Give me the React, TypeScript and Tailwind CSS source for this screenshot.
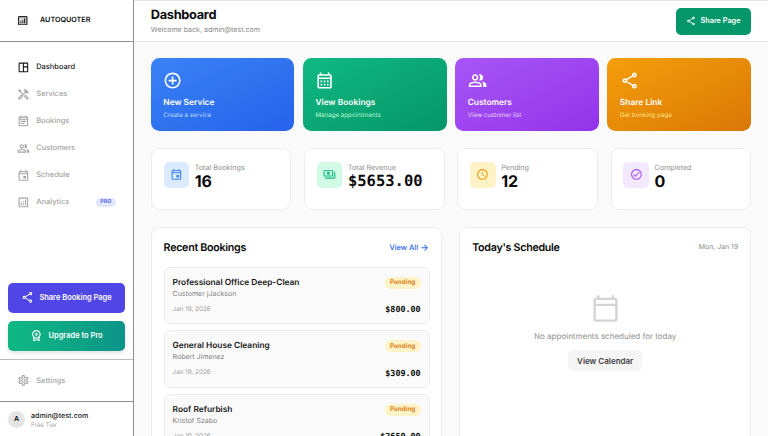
import React from "react";
import {
  MdOutlineSpaceDashboard, MdOutlineHandyman, MdOutlineCalendarMonth, MdOutlinePeopleAlt, MdOutlineEvent, MdOutlineEventNote,
  MdOutlineAnalytics, MdOutlineShare, MdOutlineWorkspacePremium, MdOutlineSettings, MdOutlineAddCircleOutline,
  MdOutlinePayments, MdOutlineSchedule, MdOutlineCheckCircle, MdArrowForward, MdOutlineCalendarToday,
} from "react-icons/md";

const nav = [
  { label: "Dashboard", Icon: MdOutlineSpaceDashboard, active: true },
  { label: "Services", Icon: MdOutlineHandyman },
  { label: "Bookings", Icon: MdOutlineEventNote },
  { label: "Customers", Icon: MdOutlinePeopleAlt },
  { label: "Schedule", Icon: MdOutlineEvent },
  { label: "Analytics", Icon: MdOutlineAnalytics, pro: true },
];

const actions = [
  { title: "New Service", sub: "Create a service", Icon: MdOutlineAddCircleOutline, bg: "from-[#3b82f6] to-[#2563eb]", sc: "text-[#bfdbfe]" },
  { title: "View Bookings", sub: "Manage appointments", Icon: MdOutlineCalendarMonth, bg: "from-[#10b981] to-[#059669]", sc: "text-[#bbf7d0]" },
  { title: "Customers", sub: "View customer list", Icon: MdOutlinePeopleAlt, bg: "from-[#a855f7] to-[#9333ea]", sc: "text-[#e9d5ff]" },
  { title: "Share Link", sub: "Get booking page", Icon: MdOutlineShare, bg: "from-[#f59e0b] to-[#d97706]", sc: "text-[#fde68a]" },
];

const stats = [
  { label: "Total Bookings", value: "16", Icon: MdOutlineEvent, box: "bg-[#dbeafe]", ic: "text-[#3b82f6]", mono: false },
  { label: "Total Revenue", value: "$5653.00", Icon: MdOutlinePayments, box: "bg-[#d1fae5]", ic: "text-[#10b981]", mono: true },
  { label: "Pending", value: "12", Icon: MdOutlineSchedule, box: "bg-[#fef3c7]", ic: "text-[#f59e0b]", mono: false },
  { label: "Completed", value: "0", Icon: MdOutlineCheckCircle, box: "bg-[#f3e8ff]", ic: "text-[#a855f7]", mono: false },
];

const bookings = [
  { title: "Professional Office Deep-Clean", who: "Customer jJackson", amt: "$800.00" },
  { title: "General House Cleaning", who: "Robert Jimenez", amt: "$309.00" },
  { title: "Roof Refurbish", who: "Kristof Szabo", amt: "$2650.00" },
];

const mono = "font-['DejaVu_Sans_Mono',monospace]";

function Logo() {
  return (
    <svg viewBox="0 0 10 10" className="h-[9.5px] w-[9.5px] shrink-0">
      <rect x="0.6" y="0.6" width="8.8" height="8.8" rx="0.8" fill="#d4d4d4" stroke="#262626" strokeWidth="1.2" />
      <rect x="2.4" y="5.6" width="1.2" height="2.2" fill="#404040" />
      <rect x="4.4" y="4.4" width="1.2" height="3.4" fill="#404040" />
      <rect x="6.4" y="2.4" width="1.2" height="5.4" fill="#262626" />
    </svg>
  );
}

export default function App() {
  return (
    <div className="flex h-[436px] w-[768px] overflow-hidden bg-[#fafafa] font-['Inter',sans-serif] text-[#0a0a0a] [text-rendering:geometricPrecision]">
      <aside className="flex h-full w-[133.8px] shrink-0 flex-col border-r border-[#8f8f8f] bg-white">
        <div className="flex h-[42px] shrink-0 items-center gap-[12.5px] border-b border-[#8f8f8f] pl-[18px]">
          <Logo />
          <span className="text-[7.2px] font-semibold">AUTOQUOTER</span>
        </div>
        <nav className="flex flex-col gap-[3px] pt-[13px]">
          {nav.map(({ label, Icon, active, pro }) => (
            <div key={label} className={`flex h-[24px] items-center gap-[6.4px] px-[17px] text-[7.47px] font-medium ${active ? "text-[#171717]" : "text-[#a3a3a3]"}`}>
              <Icon className={`h-[12.8px] w-[12.8px] shrink-0 ${active ? "text-[#171717]" : "text-[#a3a3a3]"}`} />
              <span className="grow">{label}</span>
              {pro && <span className="rounded-full bg-[#e0e7ff] px-[4.5px] py-[1.5px] text-[5.33px] font-bold leading-[6px] text-[#6366f1]">PRO</span>}
            </div>
          ))}
        </nav>
        <div className="grow" />
        <div className="flex flex-col gap-[8.5px] px-[8.3px] pb-[8.5px]">
          <button className="flex h-[29.5px] items-center justify-center gap-[5.5px] rounded-[5px] bg-[#4f46e5] text-[7.47px] font-semibold text-white">
            <MdOutlineShare className="h-[12.8px] w-[12.8px]" />Share Booking Page
          </button>
          <button className="flex h-[29.5px] items-center justify-center gap-[5.5px] rounded-[5px] bg-gradient-to-r from-[#10b981] to-[#0d9488] text-[7.47px] font-semibold text-white shadow-[0_2px_5px_rgba(0,0,0,0.12)]">
            <MdOutlineWorkspacePremium className="h-[12.8px] w-[12.8px]" />Upgrade to Pro
          </button>
        </div>
        <div className="border-t border-[#bdbdbd] px-[17px]">
          <div className="flex h-[41px] items-center gap-[6.4px] text-[7.47px] font-medium text-[#a3a3a3]">
            <MdOutlineSettings className="h-[12.8px] w-[12.8px]" />Settings
          </div>
        </div>
        <div className="flex h-[35px] shrink-0 items-start gap-[6px] border-t border-[#8f8f8f] pl-[8px] pt-[9px]">
          <div className="flex h-[17px] w-[17px] items-center justify-center rounded-full bg-[#e5e5e5] text-[7px] font-semibold">A</div>
          <div className="-mt-[0.5px]">
            <div className="text-[7.1px] font-medium leading-[10px] text-[#171717]">admin@test.com</div>
            <div className="text-[6.2px] leading-[9px] text-[#a3a3a3]">Free Tier</div>
          </div>
        </div>
      </aside>

      <main className="flex min-w-0 grow flex-col">
        <header className="flex h-[42px] shrink-0 items-center justify-between border-y border-[#e8e8e8] border-t-[#e5e5e5] bg-white px-[17px]">
          <div>
            <h1 className="text-[12.8px] font-bold leading-[18px] tracking-tight">Dashboard</h1>
            <p className="-mt-[0.5px] text-[7.05px] leading-[11px] text-[#8a8a8a]">Welcome back, admin@test.com</p>
          </div>
          <button className="flex h-[27px] w-[75px] items-center justify-center gap-[4px] rounded-[5px] bg-[#059669] text-[7.3px] font-semibold text-white">
            <MdOutlineShare className="h-[10px] w-[10px]" />Share Page
          </button>
        </header>

        <div className="flex flex-col px-[17px] pt-[16px]">
          <div className="grid grid-cols-4 gap-[8.53px]">
            {actions.map(({ title, sub, Icon, bg, sc }) => (
              <div key={title} className={`flex h-[73px] flex-col rounded-[8.5px] bg-gradient-to-br px-[12.5px] pt-[12.5px] text-white ${bg}`}>
                <Icon className="h-[19.2px] w-[19.2px]" />
                <div className="mt-[7.5px] text-[8.4px] font-semibold leading-[12px]">{title}</div>
                <div className={`mt-[2px] text-[6.2px] leading-[9px] ${sc}`}>{sub}</div>
              </div>
            ))}
          </div>

          <div className="mt-[17px] grid grid-cols-4 gap-[12.8px]">
            {stats.map(({ label, value, Icon, box, ic, mono: m }) => (
              <div key={label} className="flex h-[61.5px] gap-[5.5px] rounded-[8.5px] border border-[#ededed] bg-white pl-[11.8px] pt-[13px]">
                <div className={`flex h-[25.6px] w-[25.6px] shrink-0 items-center justify-center rounded-[5px] ${box}`}>
                  <Icon className={`h-[12.8px] w-[12.8px] ${ic}`} />
                </div>
                <div className="-mt-[0.5px]">
                  <div className="text-[7.2px] leading-[11px] text-[#8f8f8f]">{label}</div>
                  <div className={`font-bold leading-[17.5px] ${m ? `text-[15.5px] ${mono}` : "text-[16px]"}`}>{value}</div>
                </div>
              </div>
            ))}
          </div>

          <div className="mt-[17px] grid grid-cols-2 gap-[17px]">
            <section className="h-[240px] rounded-[8.5px] border border-[#ededed] bg-white px-[11.8px] pt-[13px]">
              <div className="flex items-center justify-between">
                <h2 className="text-[10.67px] font-semibold leading-[14px] tracking-tight">Recent Bookings</h2>
                <span className="flex items-center gap-[2px] text-[7.47px] font-medium text-[#2563eb]">View All <MdArrowForward className="h-[9.5px] w-[9.5px]" /></span>
              </div>
              <div className="mt-[12px] flex flex-col gap-[6px]">
                {bookings.map((b) => (
                  <div key={b.title} className="h-[57.6px] shrink-0 rounded-[6.4px] border border-[#ededed] bg-[#fafafa] px-[8px] pt-[9px]">
                    <div className="flex items-start justify-between">
                      <div>
                        <div className="text-[8.33px] font-semibold leading-[12px] text-[#171717]">{b.title}</div>
                        <div className="text-[7px] leading-[10.5px] text-[#808080]">{b.who}</div>
                      </div>
                      <span className="rounded-full bg-[#fef3c7] px-[5.3px] py-[1.8px] text-[6.4px] font-semibold leading-[8.5px] text-[#d97706]">Pending</span>
                    </div>
                    <div className="mt-[4px] flex items-center justify-between">
                      <span className="text-[6.3px] text-[#a3a3a3]">Jan 19, 2026</span>
                      <span className={`text-[8.4px] font-bold ${mono}`}>{b.amt}</span>
                    </div>
                  </div>
                ))}
              </div>
            </section>

            <section className="h-[240px] rounded-[8.5px] border border-[#ededed] bg-white px-[11.8px] pt-[13px]">
              <div className="flex items-center justify-between">
                <h2 className="text-[10.67px] font-semibold leading-[14px] tracking-tight">Today's Schedule</h2>
                <span className="text-[6.93px] text-[#8a8a8a]">Mon, Jan 19</span>
              </div>
              <div className="mt-[39px] flex flex-col items-center">
                <MdOutlineCalendarToday className="h-[29px] w-[29px] text-[#d4d4d4]" />
                <p className="mt-[7px] text-[8px] leading-[12px] text-[#8f8f8f]">No appointments scheduled for today</p>
                <button className="mt-[8.5px] flex h-[21px] w-[74px] items-center justify-center rounded-[5px] bg-[#f5f5f5] text-[8px] font-semibold text-[#404040]">View Calendar</button>
              </div>
            </section>
          </div>
        </div>
      </main>
    </div>
  );
}
